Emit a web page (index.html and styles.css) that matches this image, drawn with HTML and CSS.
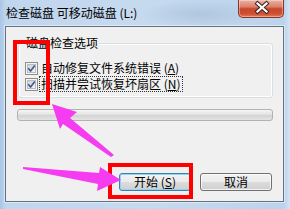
FILE: index.html
```html
<!DOCTYPE html>
<html>
<head>
<meta charset="utf-8">
<link rel="stylesheet" href="styles.css">
</head>
<body>
<div class="window">
  <div class="titlebar">
    <span class="title">检查磁盘 可移动磁盘 (L:)</span>
    <div class="close">
      <svg width="46" height="18" viewBox="0 0 46 18">
        <path d="M19.5 4.5 L28.5 12.5 M28.5 4.5 L19.5 12.5" stroke="#3a2a28" stroke-width="4.2" stroke-linecap="square" fill="none"/>
        <path d="M19.5 4.5 L28.5 12.5 M28.5 4.5 L19.5 12.5" stroke="#ffffff" stroke-width="2.2" stroke-linecap="square" fill="none"/>
      </svg>
    </div>
  </div>
  <div class="client">
    <div class="group">
      <div class="legend">磁盘检查选项</div>
      <div class="opts">
        <div class="opt">
          <svg class="cb" width="13" height="13" viewBox="0 0 13 13">
            <defs>
              <linearGradient id="cbg" x1="0" y1="0" x2="1" y2="1">
                <stop offset="0" stop-color="#cbcfd5"/>
                <stop offset="1" stop-color="#f6f6f6"/>
              </linearGradient>
            </defs>
            <rect x="0.5" y="0.5" width="12" height="12" fill="#f4f4f4" stroke="#8e8f8f"/>
            <rect x="2.5" y="2.5" width="8" height="8" fill="url(#cbg)" stroke="#b9bcc0"/>
            <path d="M3.2 6.3 L5.6 9 L9.8 3.4" stroke="#3f5a94" stroke-width="1.7" fill="none"/>
          </svg>
          <span class="lbl">自动修复文件系统错误 (<u>A</u>)</span>
        </div>
        <div class="opt">
          <svg class="cb" width="13" height="13" viewBox="0 0 13 13">
            <rect x="0.5" y="0.5" width="12" height="12" fill="#f4f4f4" stroke="#8e8f8f"/>
            <rect x="2.5" y="2.5" width="8" height="8" fill="url(#cbg)" stroke="#b9bcc0"/>
            <path d="M3.2 6.3 L5.6 9 L9.8 3.4" stroke="#3f5a94" stroke-width="1.7" fill="none"/>
          </svg>
          <span class="lbl focus">扫描并尝试恢复坏扇区 (<u>N</u>)</span>
        </div>
      </div>
    </div>
    <div class="progress"></div>
    <div class="buttons">
      <button class="btn default">开始 (<u>S</u>)</button>
      <button class="btn">取消</button>
    </div>
  </div>
  <div class="mark mark-group"></div>
  <div class="mark mark-start"></div>
  <svg class="arrows" width="290" height="209" viewBox="0 0 290 209">
    <polygon points="52,104 77,112 70,118 114,155 111,157 63,124 60,129" fill="#f53cf0"/>
    <polygon points="23,167 99,173 100,167 121,180 97,191 98,184 23,169" fill="#f53cf0"/>
  </svg>
</div>
</body>
</html>
```
FILE: styles.css
```css
html, body {
  margin: 0;
  padding: 0;
}
body {
  width: 290px;
  height: 209px;
  overflow: hidden;
  font-family: "Noto Sans CJK SC", "Liberation Sans", sans-serif;
  font-size: 12px;
  color: #000;
}
.window {
  position: relative;
  width: 290px;
  height: 209px;
  box-sizing: border-box;
  padding: 0 6px 7px 5px;
  background:
    radial-gradient(ellipse 60px 14px at 200px 14px, rgba(160,185,210,0.55), rgba(160,185,210,0) 100%),
    linear-gradient(to right, #a9c6e6 0, #c0d6ee 6px, #c6daef 50%, #bcd3ec calc(100% - 6px), #d4e3f3 100%);
}
.titlebar {
  display: flex;
  height: 26px;
}
.title {
  flex: 1;
  padding-left: 1px;
  line-height: 26px;
  white-space: nowrap;
}
.close {
  width: 46px;
  height: 18px;
  box-sizing: border-box;
  border: 1px solid #8a3426;
  border-top: none;
  border-radius: 0 0 5px 5px;
  background: linear-gradient(#eab2a5 0%, #dc7f69 40%, #c9452c 52%, #cf4f33 80%, #e0785a 100%);
  box-shadow: inset 0 0 0 1px rgba(255,255,255,0.35);
  overflow: hidden;
}
.close svg {
  display: block;
  margin: -1px 0 0 -1px;
}
.client {
  height: 176px;
  box-sizing: border-box;
  border: 1px solid #66727f;
  background: #f0f0f0;
  box-shadow: 0 0 0 1px rgba(255,255,255,0.45);
  overflow: hidden;
}
.group {
  margin: 16px 10px 0 12px;
  height: 55px;
  box-sizing: border-box;
  border: 1px solid #d5dfe5;
  border-radius: 3px;
  box-shadow: inset 0 0 0 1px #fff;
}
.legend {
  width: fit-content;
  margin: -8px 0 0 6px;
  padding: 0 1px;
  line-height: 14px;
  background: #f0f0f0;
}
.opts {
  margin-top: 10px;
  padding-left: 6px;
}
.opt {
  display: flex;
  align-items: center;
  height: 16px;
}
.cb {
  display: block;
  flex: none;
}
.lbl {
  margin-left: 2px;
  padding: 0 1px;
  line-height: 14px;
  white-space: nowrap;
  outline: 1px dotted transparent;
}
.lbl.focus {
  outline: 1px dotted #333;
}
.progress {
  margin: 11px 10px 0 11px;
  height: 12px;
  box-sizing: border-box;
  border: 1px solid #b2b2b2;
  border-radius: 3px;
  background: linear-gradient(#f6f6f6 0%, #e3e3e3 45%, #d4d4d4 55%, #e4e4e4 100%);
}
.buttons {
  display: flex;
  justify-content: flex-end;
  gap: 9px;
  margin-top: 52px;
  padding-right: 11px;
}
.btn {
  width: 72px;
  height: 18px;
  box-sizing: border-box;
  padding: 0;
  border: 1px solid #707070;
  border-radius: 3px;
  background: linear-gradient(#f2f2f2 0%, #ebebeb 50%, #dddddd 50%, #cfcfcf 100%);
  box-shadow: inset 0 0 0 1px rgba(255,255,255,0.7);
  font-family: "Noto Sans CJK SC", "Liberation Sans", sans-serif;
  font-size: 12px;
  line-height: 14px;
  color: #000;
}
.btn.default {
  border-color: #3c7fb1;
  box-shadow: inset 0 0 0 1px #8fd5f5;
}
.mark {
  position: absolute;
  box-sizing: border-box;
  border: 4px solid #ff0000;
}
.mark-group {
  left: 13px;
  top: 40px;
  width: 37px;
  height: 65px;
}
.mark-start {
  left: 108px;
  top: 163px;
  width: 85px;
  height: 36px;
}
.arrows {
  position: absolute;
  left: 0;
  top: 0;
}
```
